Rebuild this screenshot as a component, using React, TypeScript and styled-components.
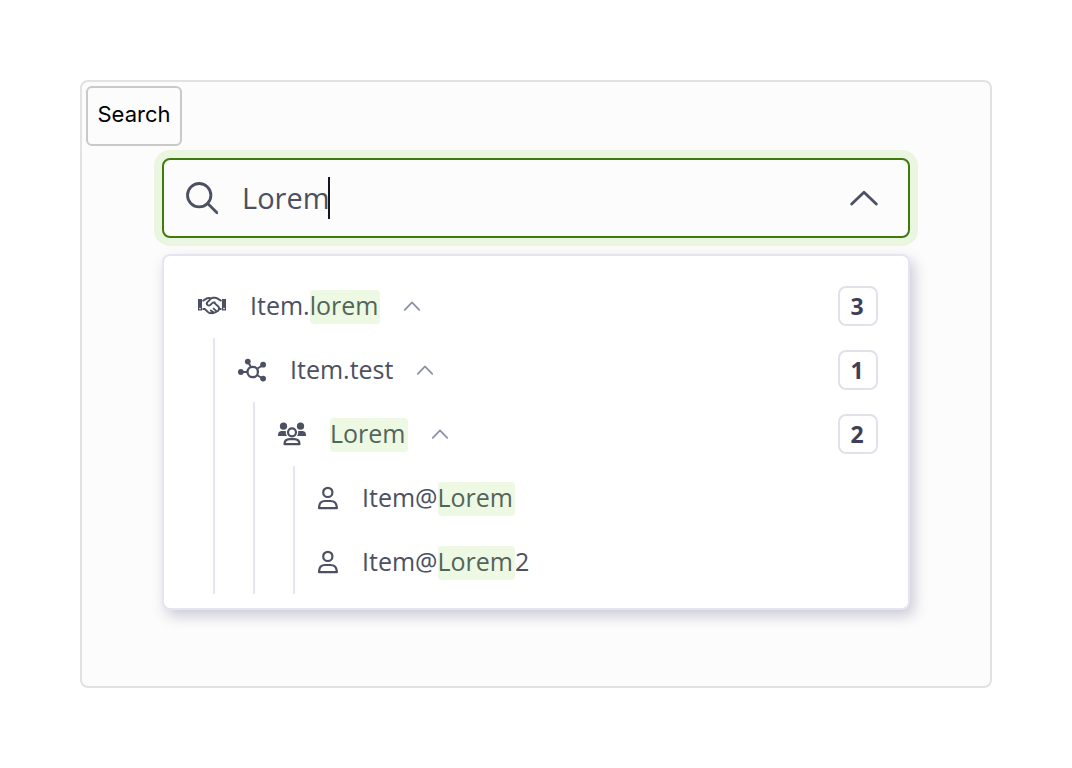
import React, { useId, useState } from 'react';
import styled, { createGlobalStyle } from 'styled-components';

const GlobalStyle = createGlobalStyle`
  *, *::before, *::after { box-sizing: border-box; }
  body {
    margin: 0;
    background: #ffffff;
    color: #4b5062;
    font-family: 'Open Sans', 'Noto Sans', sans-serif;
  }
`;

const Page = styled.main`
  padding: 80px;
`;

const Panel = styled.section`
  padding: 4px;
  border: 2px solid #e2e2e2;
  border-radius: 8px;
  background: #fcfcfc;
`;

const SearchLabel = styled.label`
  display: flex;
  justify-content: center;
  width: 96px;
  height: 60px;
  padding-top: 10px;
  border: 2px solid #c9c9c9;
  border-radius: 6px;
  color: #000000;
  font: 400 22px/32px Inter, sans-serif;
`;

const SearchArea = styled.div`
  padding: 12px 76px 72px;
`;

const Field = styled.div`
  display: flex;
  align-items: center;
  height: 80px;
  padding: 0 30px 0 22px;
  border: 2px solid #3f7a0d;
  border-radius: 8px;
  box-shadow: 0 0 0 8px #eaf6e0;
`;

const InputWrap = styled.div`
  position: relative;
  flex: 1;
  margin: 0 24px;
`;

const TextInput = styled.input`
  display: block;
  width: 100%;
  height: 42px;
  padding: 0 0 2px;
  border: 0;
  outline: 0;
  background: transparent;
  color: #4b5062;
  caret-color: transparent;
  font: 400 29px/40px 'Open Sans', sans-serif;
`;

const CaretTrack = styled.span`
  position: absolute;
  top: 0;
  left: 0;
  height: 42px;
  box-shadow: inset -2px 0 0 #15171f;
  color: transparent;
  font: 400 29px/40px 'Open Sans', sans-serif;
  white-space: pre;
  pointer-events: none;
`;

const IconButton = styled.button`
  display: flex;
  padding: 0;
  border: 0;
  background: none;
  color: inherit;
  cursor: pointer;
`;

const Dropdown = styled.div`
  margin-top: 16px;
  padding: 18px 30px 14px 34px;
  border: 2px solid #e5e5f1;
  border-radius: 8px;
  background: #ffffff;
  box-shadow: 4px 6px 14px rgba(60, 60, 110, 0.26);
`;

const Tree = styled.ul`
  margin: 0;
  padding: 0;
  list-style: none;
`;

const Branch = styled(Tree)`
  margin-left: 15px;
  padding-left: 23px;
  border-left: 2px solid #e5e5f1;
`;

const Row = styled.div`
  display: flex;
  align-items: center;
  gap: 24px;
  height: 64px;
`;

const Name = styled.span`
  padding-bottom: 2px;
  font-size: 25px;
  line-height: 30px;
  white-space: nowrap;
`;

const Highlight = styled.mark`
  display: inline-block;
  margin-bottom: -4px;
  padding: 0 2px 4px 0;
  border-radius: 4px;
  background: #edf9e2;
  color: #53655b;
`;

const Badge = styled.span`
  display: flex;
  align-items: center;
  justify-content: center;
  width: 40px;
  height: 40px;
  margin-left: auto;
  padding-right: 2px;
  border: 2px solid #e1e1e9;
  border-radius: 8px;
  color: #3d4058;
  font-size: 23px;
  font-weight: 700;
  line-height: 32px;
`;

const SearchIcon = () => (
  <svg width="32" height="34" viewBox="0 0 32 34" fill="none" stroke="currentColor" strokeWidth="2.8" aria-hidden="true">
    <circle cx="13.2" cy="14.2" r="11.7" />
    <path d="M21.7 22.5 31 31.8" strokeLinecap="round" />
  </svg>
);

const BigChevron = () => (
  <svg width="28" height="16" viewBox="0 0 28 16" fill="none" stroke="#4b5062" strokeWidth="2.8" aria-hidden="true">
    <path d="M1.7 14 14 2.2 26.3 14" strokeLinecap="round" strokeLinejoin="round" />
  </svg>
);

const SmallChevron = () => (
  <svg width="16" height="10" viewBox="0 0 16 10" fill="none" stroke="#8d90ab" strokeWidth="1.8" aria-hidden="true">
    <path d="M.8 8.8 8 1.4l7.2 7.4" strokeLinecap="round" strokeLinejoin="round" />
  </svg>
);

const HandshakeIcon = () => (
  <svg width="28" height="20" viewBox="0 0 28 20" fill="none" stroke="currentColor" strokeWidth="1.9" strokeLinecap="round" strokeLinejoin="round" aria-hidden="true">
    <path d="M0 3h4v11.4H0zM24 3h4v11.4h-4z" fill="currentColor" stroke="none" />
    <circle cx="2" cy="12.6" r=".8" fill="#ffffff" stroke="none" />
    <circle cx="26" cy="12.6" r=".8" fill="#ffffff" stroke="none" />
    <path d="M5.2 4.6 8.8 2.4Q10.2 1.8 12 2.1M5.2 13h1.6l3.8 3.6q1.3 1 2.5.2 1.5 1.1 2.9-.3 1.9.5 2.7-1.3 2.1 0 2-2.2h2.1M22.8 4.6l-3.6-2.2q-1-.6-2.2-.6h-2q-1.1 0-2 .8L9.4 6.1q-1.3 1.5 0 2.8 1.5 1.3 3 0l2.8-2.5h1.6M16 6.6l4.6 4.2q.8 1 .1 2.2M15.6 12.6l2.8 2.5M12.8 14.4l2.8 2.1" />
  </svg>
);

const NetworkIcon = () => (
  <svg width="28" height="24" viewBox="0 0 28 24" fill="currentColor" stroke="currentColor" aria-hidden="true">
    <path d="M3 14h6M10 4l3 5M19.5 10.5 25 7M19 17l5.5 3.5" fill="none" strokeWidth="2" />
    <circle cx="14.7" cy="14" r="5.2" fill="none" strokeWidth="2.3" />
    <g stroke="none">
      <circle cx="2.8" cy="14" r="2.9" />
      <circle cx="9.8" cy="3.6" r="2.9" />
      <circle cx="25.1" cy="6.7" r="2.9" />
      <circle cx="25.1" cy="20.6" r="2.9" />
    </g>
  </svg>
);

const GroupIcon = () => (
  <svg width="28" height="24" viewBox="0 0 28 24" fill="currentColor" aria-hidden="true">
    <circle cx="5.5" cy="4.2" r="3.6" />
    <circle cx="22.5" cy="4.2" r="3.6" />
    <path d="M0 14v-1.2Q0 9 4 9h3.8q-.4 2.7 1.2 5zM28 14v-1.2Q28 9 24 9h-3.8q.4 2.7-1.2 5z" />
    <g fill="none" stroke="currentColor" strokeWidth="2.2" strokeLinejoin="round">
      <circle cx="14" cy="10.3" r="4" />
      <path d="M6.5 22.2q0-5 5.3-5h4.4q5.3 0 5.3 5z" />
    </g>
  </svg>
);

const PersonIcon = () => (
  <svg width="20" height="24" viewBox="0 0 20 24" fill="none" stroke="currentColor" strokeWidth="2.2" strokeLinejoin="round" aria-hidden="true">
    <circle cx="9.8" cy="6.4" r="4.6" />
    <path d="M1.1 22.2v-1Q1.3 15 7.2 15h5.2q6 0 6.4 6.2v1z" />
  </svg>
);

type Kind = 'deal' | 'network' | 'group' | 'person';

interface Item {
  kind: Kind;
  name: string;
  count?: number;
  children?: Item[];
}

const items: Item[] = [
  {
    kind: 'deal',
    name: 'Item.lorem',
    count: 3,
    children: [
      {
        kind: 'network',
        name: 'Item.test',
        count: 1,
        children: [
          {
            kind: 'group',
            name: 'Lorem',
            count: 2,
            children: [
              { kind: 'person', name: 'Item@Lorem' },
              { kind: 'person', name: 'Item@Lorem2' },
            ],
          },
        ],
      },
    ],
  },
];

const icons: Record<Kind, React.ReactNode> = {
  deal: <HandshakeIcon />,
  network: <NetworkIcon />,
  group: <GroupIcon />,
  person: <PersonIcon />,
};

function Matched({ text, query }: { text: string; query: string }) {
  const at = query ? text.toLowerCase().indexOf(query.toLowerCase()) : -1;
  if (at < 0) return <Name>{text}</Name>;
  const end = at + query.length;
  return (
    <Name>
      {text.slice(0, at)}
      <Highlight>{text.slice(at, end)}</Highlight>
      {text.slice(end)}
    </Name>
  );
}

function TreeItem({ item, query }: { item: Item; query: string }) {
  const [open, setOpen] = useState(true);
  return (
    <li>
      <Row>
        {icons[item.kind]}
        <Matched text={item.name} query={query} />
        {item.children && (
          <IconButton type="button" aria-label={`Toggle ${item.name}`} aria-expanded={open} onClick={() => setOpen(!open)}>
            <SmallChevron />
          </IconButton>
        )}
        {item.count !== undefined && <Badge>{item.count}</Badge>}
      </Row>
      {item.children && open && (
        <Branch>
          {item.children.map((child) => (
            <TreeItem key={child.name} item={child} query={query} />
          ))}
        </Branch>
      )}
    </li>
  );
}

export default function App() {
  const id = useId();
  const [query, setQuery] = useState('Lorem');
  const [open, setOpen] = useState(true);
  return (
    <Page>
      <GlobalStyle />
      <Panel>
        <SearchLabel htmlFor={id}>Search</SearchLabel>
        <SearchArea>
          <Field>
            <SearchIcon />
            <InputWrap>
              <TextInput id={id} type="text" value={query} onChange={(e) => setQuery(e.target.value)} />
              <CaretTrack aria-hidden="true">{query}</CaretTrack>
            </InputWrap>
            <IconButton type="button" aria-label="Toggle results" aria-expanded={open} onClick={() => setOpen(!open)}>
              <BigChevron />
            </IconButton>
          </Field>
          {open && (
            <Dropdown>
              <Tree>
                {items.map((item) => (
                  <TreeItem key={item.name} item={item} query={query} />
                ))}
              </Tree>
            </Dropdown>
          )}
        </SearchArea>
      </Panel>
    </Page>
  );
}
